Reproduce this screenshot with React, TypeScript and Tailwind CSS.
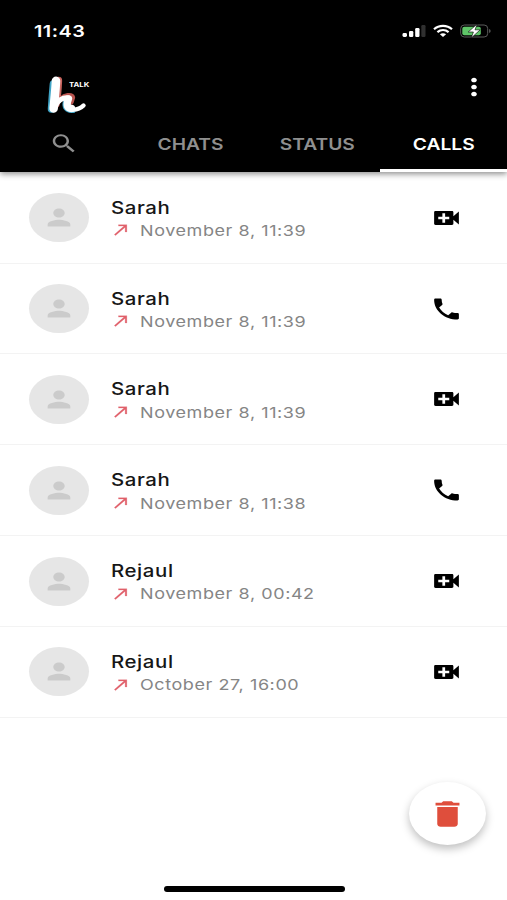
import clsx from 'clsx';

type CallKind = 'video' | 'voice';

interface Call {
  id: number;
  name: string;
  time: string;
  kind: CallKind;
}

const calls: Call[] = [
  { id: 1, name: 'Sarah', time: 'November 8, 11:39', kind: 'video' },
  { id: 2, name: 'Sarah', time: 'November 8, 11:39', kind: 'voice' },
  { id: 3, name: 'Sarah', time: 'November 8, 11:39', kind: 'video' },
  { id: 4, name: 'Sarah', time: 'November 8, 11:38', kind: 'voice' },
  { id: 5, name: 'Rejaul', time: 'November 8, 00:42', kind: 'video' },
  { id: 6, name: 'Rejaul', time: 'October 27, 16:00', kind: 'video' },
];

const icons = {
  search:
    'M15.5 14h-.79l-.28-.27C15.41 12.59 16 11.11 16 9.5 16 5.91 13.09 3 9.5 3S3 5.91 3 9.5 5.91 16 9.5 16c1.61 0 3.09-.59 4.23-1.57l.27.28v.79l5 4.99L20.49 19l-4.99-5zm-6 0C7.01 14 5 11.99 5 9.5S7.01 5 9.5 5 14 7.01 14 9.5 11.99 14 9.5 14z',
  more: 'M12 8c1.1 0 2-.9 2-2s-.9-2-2-2-2 .9-2 2 .9 2 2 2zm0 2c-1.1 0-2 .9-2 2s.9 2 2 2 2-.9 2-2-.9-2-2-2zm0 6c-1.1 0-2 .9-2 2s.9 2 2 2 2-.9 2-2-.9-2-2-2z',
  person:
    'M12 12c2.21 0 4-1.79 4-4s-1.79-4-4-4-4 1.79-4 4 1.79 4 4 4zm0 2c-2.67 0-8 1.34-8 4v2h16v-2c0-2.66-5.33-4-8-4z',
  made: 'M9 5v2h6.59L4 18.59 5.41 20 17 8.41V15h2V5z',
  video:
    'M17 10.5V7c0-.55-.45-1-1-1H4c-.55 0-1 .45-1 1v10c0 .55.45 1 1 1h12c.55 0 1-.45 1-1v-3.5l4 4v-11l-4 4zM14 13h-3v3H9v-3H6v-2h3V8h2v3h3v2z',
  voice:
    'M6.62 10.79c1.44 2.83 3.76 5.14 6.59 6.59l2.2-2.2c.27-.27.67-.36 1.02-.24 1.12.37 2.33.57 3.57.57.55 0 1 .45 1 1V20c0 .55-.45 1-1 1-9.39 0-17-7.61-17-17 0-.55.45-1 1-1h3.5c.55 0 1 .45 1 1 0 1.25.2 2.45.57 3.57.11.35.03.74-.25 1.02l-2.2 2.2z',
  trash:
    'M6 19c0 1.1.9 2 2 2h8c1.1 0 2-.9 2-2V7H6v12zM19 4h-3.5l-1-1h-5l-1 1H5v2h14V4z',
};

function Icon({ name, className }: { name: keyof typeof icons; className: string }) {
  return (
    <svg viewBox="0 0 24 24" preserveAspectRatio="none" fill="currentColor" className={clsx('shrink-0', className)}>
      <path d={icons[name]} />
    </svg>
  );
}

function StatusBar() {
  return (
    <div className="flex h-[62px] items-center justify-between pr-[15px] pl-[34px] text-white">
      <span className="origin-left scale-x-[1.2] text-[16.5px] font-semibold tracking-[0.4px]">11:43</span>
      <div className="flex items-center">
        <svg viewBox="0 0 24 14" className="h-[14px] w-6" fill="#fff">
          <rect x="0.5" y="9" width="4.5" height="4" rx="1.4" />
          <rect x="7" y="7" width="4.3" height="6" rx="1.2" />
          <rect x="13.2" y="4" width="4.3" height="9" rx="1.2" />
          <rect x="19.3" y="1" width="4.2" height="12" rx="1.2" fill="#303030" />
        </svg>
        <svg viewBox="0 0 20 14" className="ml-[7px] h-[14px] w-5" fill="none" stroke="#fff" strokeWidth="2.2">
          <path d="M1 5.2C6 .7 14 .7 19 5.2" />
          <path d="M4.4 8.2c3.3-2.8 7.9-2.8 11.2 0" />
          <path d="M6.9 10.3c1.8-1.5 4.4-1.5 6.2 0L10 13z" fill="#fff" stroke="none" />
        </svg>
        <svg viewBox="0 0 32 14" className="ml-[7px] h-[14px] w-8">
          <rect x="0.7" y="1" width="27" height="12" rx="3.6" fill="none" stroke="#5c5c5c" strokeWidth="1" />
          <rect x="2.3" y="2.7" width="18.5" height="8.6" rx="2" fill="#5fc568" />
          <path d="M29.3 5v4c1.6-.6 1.6-3.4 0-4z" fill="#777" />
          <path d="M17.2 0 8.2 8h5.2l-2.2 6 9-8.2H15z" fill="#fff" stroke="#000" strokeWidth="0.6" />
        </svg>
      </div>
    </div>
  );
}

function Logo() {
  return (
    <div className="relative h-[42px] w-[44px]">
      <svg viewBox="0 0 44 42" className="h-full w-full" fill="none" strokeLinecap="round" strokeLinejoin="round">
        {/* red and cyan fringes behind the white letter */}
        <path d="M12.4 6.5C12 16 11.5 22 10 30" stroke="#c9655f" strokeWidth="7.5" />
        <path d="M15 25C19 21.5 25.5 20.5 26.4 23.5L25 28" stroke="#b9544f" strokeWidth="5.5" />
        <path d="M7.4 10C6.6 19 6 27 5.5 35" stroke="#3fa4c6" strokeWidth="7.5" />
        <path d="M20 27C17.5 33 21 36.5 27 36.3" stroke="#3fa4c6" strokeWidth="5.5" />
        <path d="M10 6.8C9.6 16 8.4 26 7.6 34.5" stroke="#fff" strokeWidth="8.6" />
        <path d="M9 33C11 27 17 22.5 23 24" stroke="#fff" strokeWidth="5" />
        <path d="M22.4 25C20 31 21 34.5 25.5 34.5" stroke="#fff" strokeWidth="7.4" />
        <path d="M25.5 35.5C31 36 35 34 37.5 31.5" stroke="#fff" strokeWidth="4.4" />
      </svg>
      <span className="absolute top-[6.5px] left-[22.5px] origin-left scale-x-[1.2] text-[6.5px] leading-[10px] font-bold text-white">
        TALK
      </span>
    </div>
  );
}

function Tabs() {
  const labels = ['CHATS', 'STATUS', 'CALLS'];
  return (
    <nav className="grid h-[56.5px] grid-cols-4 text-[16px] font-semibold text-[#8f8f8f]">
      <button className="flex items-center justify-center pl-[2px]">
        <Icon name="search" className="h-[25px] w-[30px]" />
      </button>
      {labels.map((label) => (
        <button
          key={label}
          className={clsx(
            'flex items-center justify-center border-b-[3px] pt-[3px]',
            label === 'CALLS' ? 'border-white text-white' : 'border-transparent',
          )}
        >
          <span className="scale-x-[1.2]">{label}</span>
        </button>
      ))}
    </nav>
  );
}

function CallRow({ call }: { call: Call }) {
  return (
    <li className="flex h-[90.85px] items-center border-b border-[#f3f3f3] pr-11 pl-[29px]">
      <div className="flex h-[49px] w-[60px] items-center justify-center rounded-[50%] bg-[#e6e6e6] text-[#cbcbcb]">
        <Icon name="person" className="h-[27px] w-[34px]" />
      </div>
      <div className="ml-[21.5px] flex-1 pt-1">
        <p className="w-max origin-left scale-x-[1.2] text-[17px] leading-[23px] font-medium tracking-[0.5px] text-[#161616]">
          {call.name}
        </p>
        <div className="flex h-[23px] items-center">
          <Icon name="made" className="mb-[2px] h-[17.5px] w-[20px] stroke-[#e0606a] stroke-[0.3] text-[#e0606a]" />
          <span className="ml-[9px] origin-left scale-x-[1.2] text-[15px] tracking-[0.48px] text-[#858585]">
            {call.time}
          </span>
        </div>
      </div>
      <button>
        <Icon name={call.kind} className="h-[28px] w-[33px] text-black" />
      </button>
    </li>
  );
}

export default function App() {
  return (
    <div className="relative flex h-[900px] w-[507px] flex-col overflow-hidden bg-white font-['Inter',sans-serif]">
      <header className="relative z-10 h-[172px] shrink-0 bg-black shadow-[0_2px_6px_rgba(0,0,0,0.45)]">
        <StatusBar />
        <div className="flex h-[53.5px] items-center justify-between pr-4 pl-[46px]">
          <div className="pt-3">
            <Logo />
          </div>
          <Icon name="more" className="mb-[3px] h-[28px] w-[34px] text-white" />
        </div>
        <Tabs />
      </header>

      <ul className="pt-[0.8px]">
        {calls.map((call) => (
          <CallRow key={call.id} call={call} />
        ))}
      </ul>

      <button className="absolute top-[782px] left-[409px] flex h-[63px] w-[77px] items-center justify-center rounded-[50%] bg-white text-[#df4e3c] shadow-[0_4px_8px_rgba(0,0,0,0.25)]">
        <Icon name="trash" className="h-[34px] w-[41px]" />
      </button>
      <div className="absolute bottom-[8px] left-[164px] h-[6px] w-[181px] rounded-full bg-black" />
    </div>
  );
}
